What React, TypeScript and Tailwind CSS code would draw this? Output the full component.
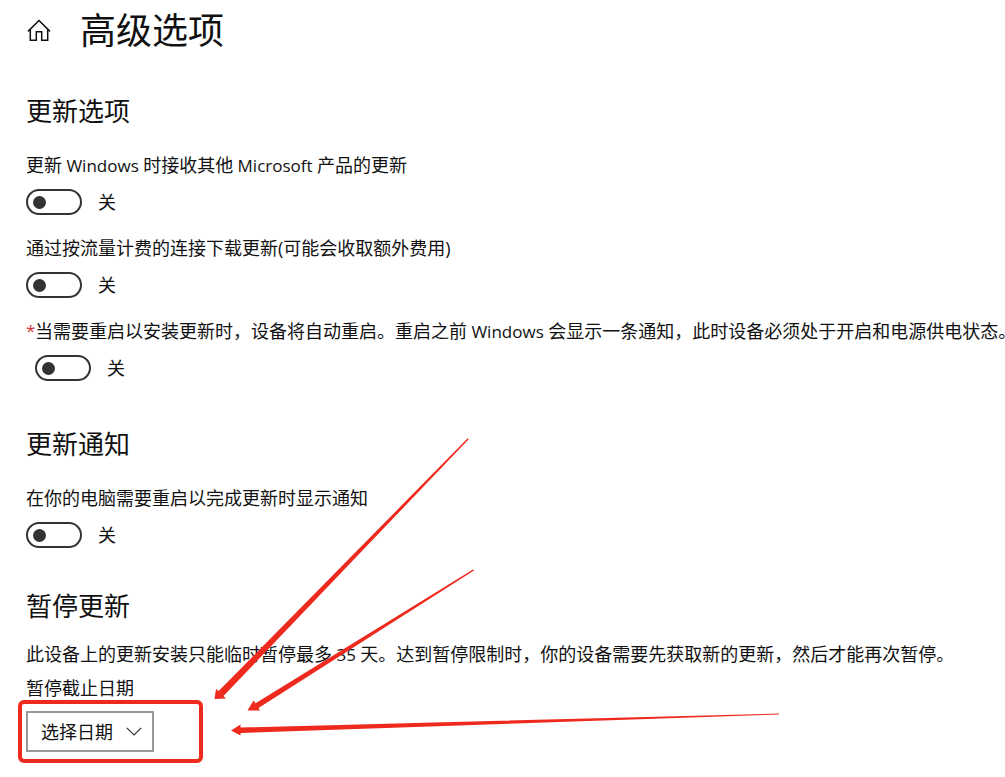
import { useId, useState, type ReactNode } from "react";

type ToggleProps = {
  label: ReactNode;
  required?: boolean;
};

function Latin({ children }: { children: ReactNode }) {
  return <span className="text-[17px]">{children}</span>;
}

function ToggleSetting({ label, required = false }: ToggleProps) {
  const id = useId();
  const [on, setOn] = useState(false);

  return (
    <div className="flex items-start">
      {required && <span className="w-[9px] shrink-0 text-[17px] leading-6 text-[#d13438]">*</span>}
      <div className="flex flex-col gap-3">
        <label htmlFor={id} className="h-6 whitespace-nowrap leading-6">
          {label}
        </label>
        <div className="flex h-[26px] items-center gap-4">
          <input
            id={id}
            type="checkbox"
            role="switch"
            checked={on}
            onChange={(event) => setOn(event.target.checked)}
            className="flex h-[26px] w-14 shrink-0 cursor-pointer appearance-none items-center rounded-full border-2 border-[#333] bg-white px-[5px] before:size-[13px] before:rounded-full before:bg-[#333] checked:justify-end checked:border-[#0078d7] checked:bg-[#0078d7] checked:before:bg-white"
          />
          <span className="leading-6">{on ? "开" : "关"}</span>
        </div>
      </div>
    </div>
  );
}

function SectionTitle({ children }: { children: ReactNode }) {
  return <h2 className="text-[26px] leading-9">{children}</h2>;
}

function HomeIcon() {
  return (
    <svg viewBox="0 0 24 24" className="size-6" fill="none" stroke="currentColor" strokeWidth="1.5" aria-hidden="true">
      <path d="M1 12.400 12 1.500l11 10.900" />
      <path d="M3.300 10.600V21.300h6v-8.600h5.400v8.600h6V10.600" />
    </svg>
  );
}

function Arrows() {
  return (
    <svg
      width="1005"
      height="777"
      viewBox="0 0 1005 777"
      className="pointer-events-none absolute left-0 top-0"
      fill="#ee2a1e"
      aria-hidden="true"
    >
      <path d="M214.500 699 216 689 218.700 691 467.700 438.300 468.700 439.300 223.500 696 226 698.500Z" />
      <path d="M247.500 710.500 253.500 700.500 255.500 703.200 473 569.500 474 570.500 258.500 708 260 710.500Z" />
      <path d="M231 730.500 240.500 724.500 240.500 727.500 779 713.500 779 714.500 240.500 733 240.500 735.500Z" />
    </svg>
  );
}

export default function App() {
  return (
    <main
      lang="zh-CN"
      className="relative min-h-screen overflow-hidden bg-white pb-6 pl-[26px] pt-[7px] font-['Open_Sans','Noto_Sans_CJK_SC',sans-serif] text-lg text-[#111]"
    >
      <header className="flex items-center gap-[29px]">
        <a href="#home" aria-label="主页" className="ml-px">
          <HomeIcon />
        </a>
        <h1 className="text-4xl leading-[48px]">高级选项</h1>
      </header>

      <section className="mt-[38px] flex flex-col gap-6">
        <SectionTitle>更新选项</SectionTitle>
        <div className="flex flex-col gap-[21px]">
          <ToggleSetting
            label={
              <>
                更新<Latin> Windows </Latin>时接收其他<Latin> Microsoft </Latin>产品的更新
              </>
            }
          />
          <ToggleSetting label="通过按流量计费的连接下载更新(可能会收取额外费用)" />
          <ToggleSetting
            required
            label={
              <>
                当需要重启以安装更新时，设备将自动重启。重启之前<Latin> Windows </Latin>
                会显示一条通知，此时设备必须处于开启和电源供电状态。
              </>
            }
          />
        </div>
      </section>

      <section className="mt-[45px] flex flex-col gap-6">
        <SectionTitle>更新通知</SectionTitle>
        <ToggleSetting label="在你的电脑需要重启以完成更新时显示通知" />
      </section>

      <section className="mt-10 flex flex-col items-start">
        <SectionTitle>暂停更新</SectionTitle>
        <p className="mt-[18px] h-6 whitespace-nowrap leading-6">
          此设备上的更新安装只能临时暂停最多<Latin> 35 </Latin>
          天。达到暂停限制时，你的设备需要先获取新的更新，然后才能再次暂停。
        </p>
        <label htmlFor="pause-until" className="mt-[10px] leading-6">
          暂停截止日期
        </label>
        <div className="relative mt-[11px]">
          <select
            id="pause-until"
            className="block h-[41px] w-32 appearance-none border-2 border-[#999] bg-white pl-[13px] text-lg leading-6"
          >
            <option>选择日期</option>
          </select>
          <svg
            viewBox="0 0 16 9"
            className="pointer-events-none absolute right-3 top-4 h-[9px] w-4"
            fill="none"
            stroke="#333"
            strokeWidth="1.200"
            aria-hidden="true"
          >
            <path d="M.8.8 8 8 15.200.8" />
          </svg>
          <div className="pointer-events-none absolute -left-2 -top-[11px] h-[63px] w-[185px] rounded-md border-4 border-[#ee2a1e]" />
        </div>
      </section>

      <Arrows />
    </main>
  );
}
